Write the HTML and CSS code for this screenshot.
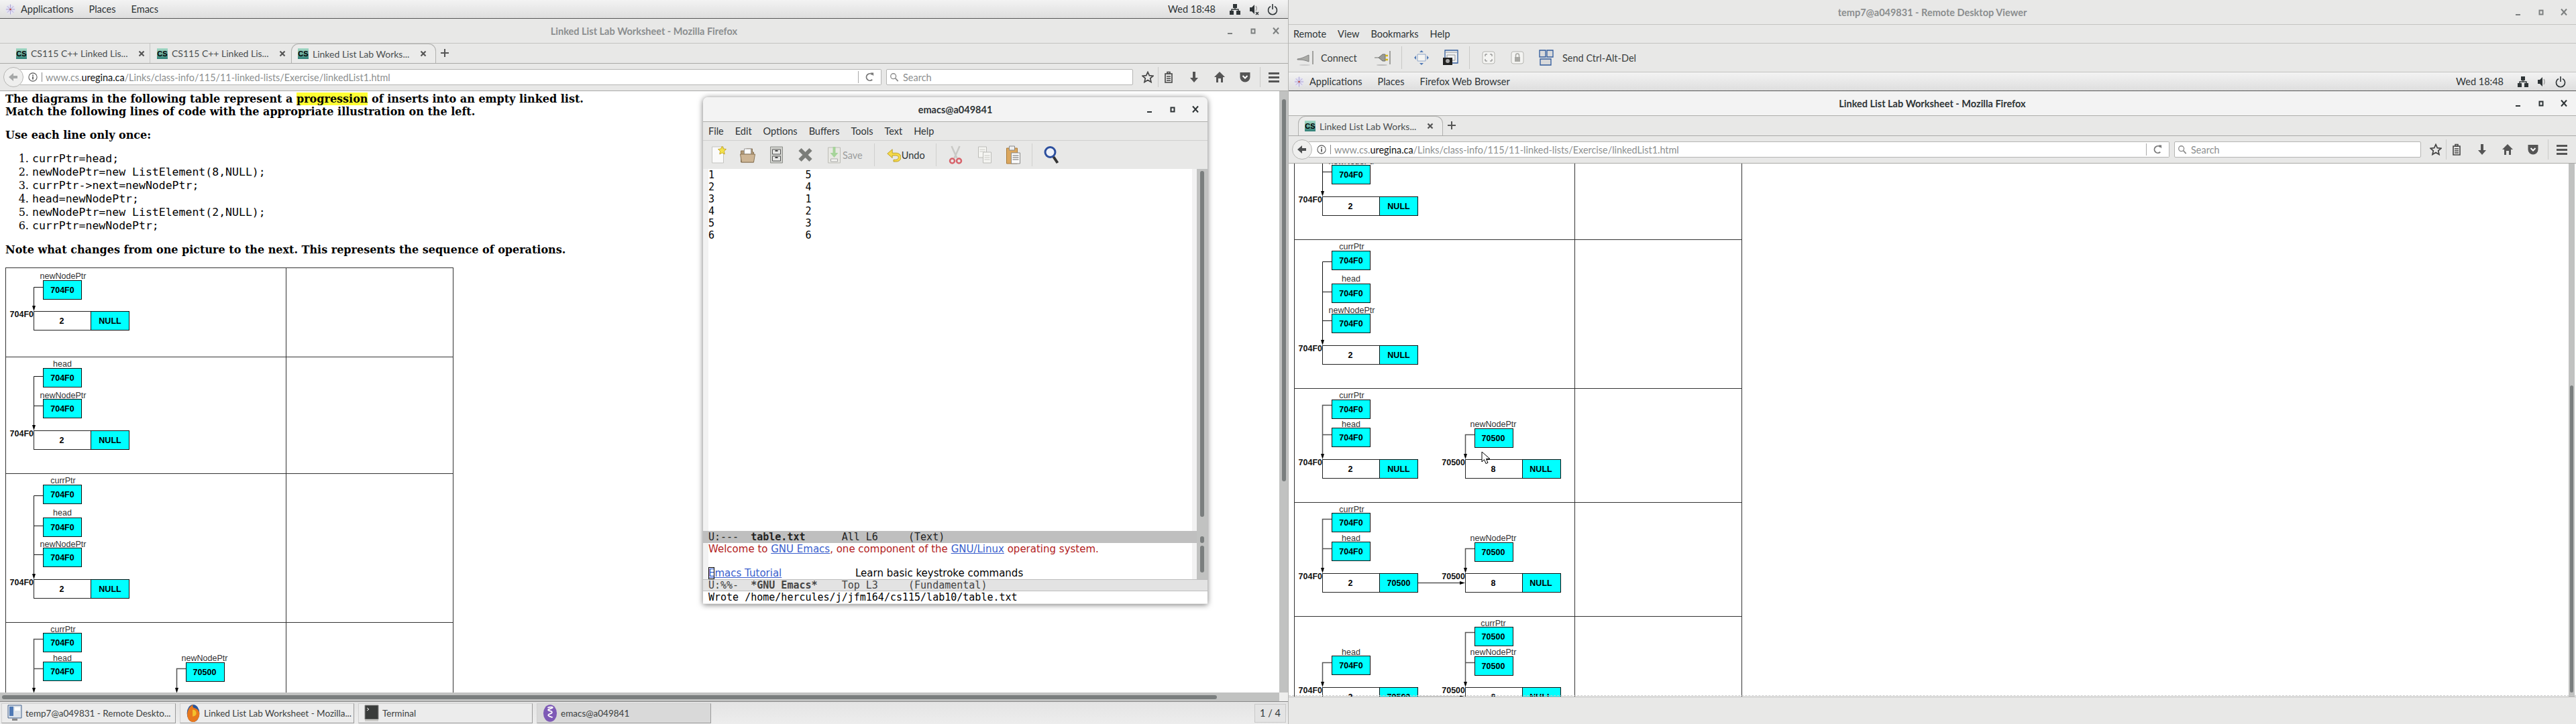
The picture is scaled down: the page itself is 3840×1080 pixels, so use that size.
FILE: index.html
```html
<!DOCTYPE html>
<html lang="en">
<head>
    <meta charset="UTF-8">
    <title>Linked List Lab Worksheet</title>
    <link rel="stylesheet" href="styles.css">
</head>
<body>
<svg class="sprite" width="0" height="0">
    <symbol id="i-min" viewBox="0 0 16 16"><rect x="4" y="11" width="7" height="2" fill="currentColor"/></symbol>
    <symbol id="i-max" viewBox="0 0 16 16"><rect x="5.5" y="5.5" width="5" height="6" fill="none" stroke="currentColor" stroke-width="2"/></symbol>
    <symbol id="i-close" viewBox="0 0 16 16"><path d="M4 3.5l8 9M12 3.5l-8 9" fill="none" stroke="currentColor" stroke-width="2"/></symbol>
    <symbol id="i-foot" viewBox="0 0 16 18"><circle cx="8" cy="9" r="7.5" fill="#e4e2f2"/><path d="M8 1v16M1 9h14M3 4l10 10M13 4L3 14" stroke="#a8a2d0" stroke-width="1"/><circle cx="8" cy="9" r="3" fill="#c9c3e4"/><circle cx="8" cy="9" r="1.3" fill="#c0392b"/></symbol>
    <symbol id="i-net" viewBox="0 0 16 18"><path d="M5 1h6v6H5zM0 11h6v6H0zM10 11h6v6h-6z" fill="#2e3436"/><path d="M8 6v3M3 12V9h10v3" fill="none" stroke="#2e3436" stroke-width="1.4"/></symbol>
    <symbol id="i-vol" viewBox="0 0 16 18"><path d="M2 6h3l4-4v14l-4-4H2z" fill="#2e3436"/><path d="M11 5c1.500 2 1.500 6 0 8" fill="none" stroke="#999" stroke-width="1.300"/></symbol>
    <symbol id="i-mute" viewBox="0 0 16 18"><path d="M2 6h3l4-4v14l-4-4H2z" fill="#2e3436"/><path d="M11 13l4 4M15 13l-4 4" stroke="#2e3436" stroke-width="1.500"/><path d="M11 4c1.500 2 1.500 5 0 7" fill="none" stroke="#999" stroke-width="1.300"/></symbol>
    <symbol id="i-power" viewBox="0 0 16 18"><path d="M5 4.500a6.500 6.500 0 1 0 6 0" fill="none" stroke="#2e3436" stroke-width="1.600"/><path d="M8 1v8" stroke="#2e3436" stroke-width="1.600"/></symbol>
    <symbol id="i-x" viewBox="0 0 10 10"><path d="M1.500 1.500l7 7M8.500 1.500l-7 7" stroke="#555" stroke-width="2.200"/></symbol>
    <symbol id="i-plus" viewBox="0 0 14 14"><path d="M7 1v12M1 7h12" stroke="#555" stroke-width="2"/></symbol>
    <symbol id="i-back" viewBox="0 0 16 16"><path d="M14 6H8V2L1 8l7 6v-4h6z" fill="currentColor"/></symbol>
    <symbol id="i-info" viewBox="0 0 16 16"><circle cx="8" cy="8" r="7" fill="none" stroke="#555" stroke-width="1.200"/><rect x="7" y="7" width="2" height="5" fill="#555"/><rect x="7" y="4" width="2" height="2" fill="#555"/></symbol>
    <symbol id="i-reload" viewBox="0 0 16 16"><path d="M12 12a5.500 5.500 0 1 1 0-8" fill="none" stroke="#777" stroke-width="2"/><path d="M9 1l5 0 0 5z" fill="#777"/></symbol>
    <symbol id="i-search" viewBox="0 0 16 16"><circle cx="6.500" cy="6.500" r="4.500" fill="none" stroke="#888" stroke-width="1.500"/><path d="M10 10l4.500 5" stroke="#888" stroke-width="2"/></symbol>
    <symbol id="i-star" viewBox="0 0 18 18"><path d="M9 1.500l2.300 5.200 5.700.5-4.300 3.700 1.300 5.600L9 13.500l-5 3 1.300-5.600L1 7.200l5.700-.5z" fill="none" stroke="#444" stroke-width="1.700"/></symbol>
    <symbol id="i-clip" viewBox="0 0 18 18"><path d="M4 4h10v13H4z" fill="none" stroke="#444" stroke-width="1.600"/><path d="M7 1.500h4V4H7zM6 8h6M6 11h6M6 14h6" fill="none" stroke="#444" stroke-width="1.500"/></symbol>
    <symbol id="i-down" viewBox="0 0 18 18"><path d="M7 1h4v9h4l-6 7-6-7h4z" fill="#555"/></symbol>
    <symbol id="i-home" viewBox="0 0 18 18"><path d="M9 1l8 8h-3v8h-3v-6H7v6H4V9H1z" fill="#555"/></symbol>
    <symbol id="i-pocket" viewBox="0 0 18 18"><path d="M1.500 2h15v7a7.500 7.500 0 0 1-15 0z" fill="#555"/><path d="M5.500 7L9 10.500 12.500 7" fill="none" stroke="#fff" stroke-width="2"/></symbol>
    <symbol id="i-menu" viewBox="0 0 18 18"><path d="M1 2h16v3H1zM1 8h16v3H1zM1 14h16v3H1z" fill="#555"/></symbol>
    <symbol id="i-new" viewBox="0 0 24 30"><path d="M2 3h17v24H2z" fill="#fafafa" stroke="#c4c4c0"/><path d="M17 2l2 4 4 .5-3 3 .7 4.500-3.700-2-3.700 2 .7-4.500-3-3 4-.5z" fill="#f3e24a" stroke="#c8a92a"/></symbol>
    <symbol id="i-open" viewBox="0 0 24 30"><path d="M2 9h8V6h9v5h2v15H2z" fill="#b39a78" stroke="#8a7556"/><path d="M7 6h10v8H7z" fill="#fff" stroke="#999"/><path d="M1 14h22l-2 12H3z" fill="#cdb595" stroke="#8a7556"/></symbol>
    <symbol id="i-cabinet" viewBox="0 0 24 30"><path d="M3 3h18v24H3z" fill="#cfd0cc" stroke="#8d8f8a"/><path d="M6 7h12v7H6zM6 17h12v7H6z" fill="#e8e8e6" stroke="#555"/><path d="M10 9h4M10 19h4" stroke="#444" stroke-width="2"/></symbol>
    <symbol id="i-delete" viewBox="0 0 24 30"><path d="M4 7l16 16M20 7L4 23" stroke="#7b7d79" stroke-width="6"/></symbol>
    <symbol id="i-saveas" viewBox="0 0 24 30"><path d="M3 4h18v23H3z" fill="#e8e8e3" stroke="#bcbcb6"/><path d="M10 3h4v9h4l-6 7-6-7h4z" fill="#a6d49a"/><path d="M7 21h10v4H7z" fill="#f5f5f2" stroke="#aaa"/></symbol>
    <symbol id="i-undo" viewBox="0 0 24 26"><path d="M10 4L2 11l8 7v-4h6c3 0 4 2 4 3s-1 4-5 4h-3v3h4c5 0 8-3 8-7s-3-7-8-7h-6z" fill="#f5d94a" stroke="#b89b22"/></symbol>
    <symbol id="i-cut" viewBox="0 0 24 30"><path d="M6 2l8 18M18 2l-8 18" stroke="#c9c9c6" stroke-width="2.500"/><circle cx="7" cy="24" r="3.500" fill="none" stroke="#d7636b" stroke-width="2.500"/><circle cx="17" cy="24" r="3.500" fill="none" stroke="#d7636b" stroke-width="2.500"/></symbol>
    <symbol id="i-copy" viewBox="0 0 24 30"><path d="M3 3h12v16H3z" fill="#f5f5f2" stroke="#bcbcb8"/><path d="M10 11h12v16H10z" fill="#f5f5f2" stroke="#bcbcb8"/><path d="M5 7h8M5 10h8M12 16h8M12 19h8M12 22h8" stroke="#c8c8c4"/></symbol>
    <symbol id="i-paste" viewBox="0 0 24 30"><path d="M2 5h16v23H2z" fill="#dba75e" stroke="#a97b38"/><path d="M6 2h8v6H6z" fill="#eee" stroke="#888"/><path d="M9 12h13v16H9z" fill="#fafafa" stroke="#888"/><path d="M11 16h9M11 19h9M11 22h9" stroke="#666"/></symbol>
    <symbol id="i-find" viewBox="0 0 24 30"><circle cx="10" cy="11" r="7.500" fill="#eef2fa" stroke="#2c4f9e" stroke-width="3"/><path d="M15 18l6 9" stroke="#333" stroke-width="4"/></symbol>
    <symbol id="i-connect" viewBox="0 0 26 24"><path d="M1 14c8-1 12-4 17-6v10c-5-2-9-3-17-3z" fill="#a9aaa6" stroke="#808080"/><path d="M24 2v20" stroke="#8a8a86" stroke-width="1.500"/><ellipse cx="12" cy="23" rx="8" ry="1" fill="#ccc"/></symbol>
    <symbol id="i-plug" viewBox="0 0 26 24"><path d="M1 12h6l6-5h4v10h-4l-6-5" fill="#9a9b97" stroke="#6f706c"/><path d="M17 9h4M17 15h4" stroke="#d3b418" stroke-width="2.500"/><path d="M24 2v20" stroke="#8a8a86" stroke-width="1.500"/><ellipse cx="12" cy="23" rx="8" ry="1" fill="#bbb"/></symbol>
    <symbol id="i-arrows" viewBox="0 0 24 24"><path d="M6 7h12v10H6z" fill="#f4f4f2" stroke="#8ea5c8"/><path d="M12 1l3 3H9zM12 23l3-3H9zM1 12l3-3v6zM23 12l-3-3v6z" fill="#4f79b5"/></symbol>
    <symbol id="i-shot" viewBox="0 0 24 24"><path d="M4 1h19v19H4z" fill="#eef0f2" stroke="#2f5a9b" stroke-width="1.300"/><path d="M4 4h19M7 8h12v8H7z" fill="none" stroke="#999"/><path d="M1 12h14v11H1z" fill="#222"/><circle cx="8" cy="17" r="3" fill="#aaa"/></symbol>
    <symbol id="i-full" viewBox="0 0 20 20"><rect x="1" y="1" width="18" height="18" rx="3" fill="#f4f4f2" stroke="#b5b5b1"/><path d="M5 8V5h3M12 5h3v3M15 12v3h-3M8 15H5v-3" fill="none" stroke="#777"/></symbol>
    <symbol id="i-lock" viewBox="0 0 20 20"><rect x="1" y="1" width="18" height="18" rx="3" fill="#f4f4f2" stroke="#b5b5b1"/><path d="M6 9h8v7H6z" fill="#a8a8a4"/><path d="M7.500 9V6.500a2.500 2.500 0 0 1 5 0V9" fill="none" stroke="#a8a8a4" stroke-width="1.500"/></symbol>
    <symbol id="i-keys" viewBox="0 0 22 24"><path d="M1 1h9v10H1zM12 1h9v10h-9zM2 14h16v9H2z" fill="#d9dadb" stroke="#2f5a9b" stroke-width="1.300"/></symbol>
    <symbol id="i-viewer" viewBox="0 0 22 26"><path d="M1 1h20v19H1z" fill="#dde3ea" stroke="#44628c"/><path d="M3 3h6v14H3z" fill="#4f79b5"/><path d="M11 4h8v5h-8z" fill="#fff"/><path d="M7 21h8v3H7z" fill="#888"/></symbol>
    <symbol id="i-fox" viewBox="0 0 22 30"><ellipse cx="11" cy="15" rx="10" ry="14" fill="#28559c"/><path d="M3 24C-1 15 4 4 11 1c-2 4 0 5 3 6 4 1 7 5 7 9 0 8-6 13-10 13-3 0-6-2-8-5z" fill="#e8791e"/><path d="M10 9c4 0 6 3 6 6s-3 5-6 5z" fill="#f4c12d"/></symbol>
    <symbol id="i-term" viewBox="0 0 22 26"><path d="M1 1h20v21H1z" fill="#3a3c3b" stroke="#888"/><path d="M1 22h20v3H1z" fill="#c9c9c6"/><path d="M4 5l3 2-3 2" fill="none" stroke="#eee"/></symbol>
    <symbol id="i-emacs" viewBox="0 0 24 30"><ellipse cx="12" cy="15" rx="11" ry="14" fill="#7e5ab6"/><path d="M8 6c5-2 9-1 8 0-3 2-8 2-7 4 2 2 7 1 6 4-1 2-6 2-6 4s6 3 7 4" fill="none" stroke="#fff" stroke-width="2"/></symbol>
</svg>

<div class="desktop">
    <section class="screen">
        <div class="panel">
            <svg class="foot"><use href="#i-foot"/></svg>
            <span class="panel-item">Applications</span>
            <span class="panel-item">Places</span>
            <span class="panel-item">Emacs</span>
            <div class="status">
                <span class="clock">Wed 18:48</span>
                <svg class="status-icon"><use href="#i-net"/></svg>
                <svg class="status-icon"><use href="#i-mute"/></svg>
                <svg class="status-icon"><use href="#i-power"/></svg>
            </div>
        </div>
        <div class="firefox">
            <div class="titlebar">
                <span class="title">Linked List Lab Worksheet - Mozilla Firefox</span>
                <div class="win-controls">
                    <svg><use href="#i-min"/></svg><svg><use href="#i-max"/></svg><svg><use href="#i-close"/></svg>
                </div>
            </div>
            <div class="tabs">
                <div class="tab tab-sep">
                    <span class="fav">CS</span><span class="tab-text">CS115 C++ Linked Lis...</span><svg class="tab-x"><use href="#i-x"/></svg>
                </div>
                <div class="tab">
                    <span class="fav">CS</span><span class="tab-text">CS115 C++ Linked Lis...</span><svg class="tab-x"><use href="#i-x"/></svg>
                </div>
                <div class="tab tab-active">
                    <span class="fav">CS</span><span class="tab-text">Linked List Lab Works...</span><svg class="tab-x"><use href="#i-x"/></svg>
                </div>
                <svg class="tab-plus"><use href="#i-plus"/></svg>
            </div>
            <div class="navbar">
                <div class="back back-off"><svg><use href="#i-back"/></svg></div>
                <div class="urlbar">
                    <svg class="url-info"><use href="#i-info"/></svg>
                    <span class="url-text">www.cs.<b>uregina.ca</b>/Links/class-info/115/11-linked-lists/Exercise/linkedList1.html</span>
                    <div class="url-reload"><svg><use href="#i-reload"/></svg></div>
                </div>
                <div class="searchbar"><svg><use href="#i-search"/></svg><span>Search</span></div>
                <div class="nav-icons">
                    <div class="nav-icon nav-star"><svg><use href="#i-star"/></svg></div>
                    <div class="nav-icon nav-clip"><svg><use href="#i-clip"/></svg></div>
                    <div class="nav-icon"><svg><use href="#i-down"/></svg></div>
                    <div class="nav-icon"><svg><use href="#i-home"/></svg></div>
                    <div class="nav-icon"><svg><use href="#i-pocket"/></svg></div>
                    <div class="nav-icon nav-menu"><svg><use href="#i-menu"/></svg></div>
                </div>
            </div>
            <div class="viewport">
                <div class="viewport-row">
                    <div class="page">
                        <p class="intro">The diagrams in the following table represent a <mark>progression</mark> of inserts into an empty linked list.<br>Match the following lines of code with the appropriate illustration on the left.</p>
                        <p class="intro">Use each line only once:</p>
                        <ol class="code-list">
                            <li><code>currPtr=head;</code></li>
                            <li><code>newNodePtr=new ListElement(8,NULL);</code></li>
                            <li><code>currPtr-&gt;next=newNodePtr;</code></li>
                            <li><code>head=newNodePtr;</code></li>
                            <li><code>newNodePtr=new ListElement(2,NULL);</code></li>
                            <li><code>currPtr=newNodePtr;</code></li>
                        </ol>
                        <p class="intro">Note what changes from one picture to the next. This represents the sequence of operations.</p>
                        <table class="worksheet">
                            <tr>
                                <td>
                                    <svg class="diagram" width="417" height="132">
                                        <text class="lbl" x="85" y="16">newNodePtr</text>
                                        <path class="wire" d="M55 28.500H41.500V58"/>
                                        <polygon class="tip" points="39,56 44,56 41.500,64"/>
                                        <rect class="ptr" x="55.500" y="18.500" width="57" height="28"/>
                                        <text class="val" x="84" y="37">704F0</text>
                                        <text class="addr" x="41" y="73">704F0</text>
                                        <rect class="node" x="41.500" y="64.500" width="142" height="28"/>
                                        <rect class="ptr" x="126.500" y="64.500" width="57" height="28"/>
                                        <text class="val" x="83" y="83">2</text>
                                        <text class="val" x="155" y="83">NULL</text>
                                    </svg>
                                </td>
                                <td class="answer"></td>
                            </tr>
                            <tr>
                                <td>
                                    <svg class="diagram" width="417" height="173">
                                        <text class="lbl" x="84" y="14">head</text>
                                        <text class="lbl" x="85" y="61">newNodePtr</text>
                                        <path class="wire" d="M55 28.500H41.500V103M55 72.500H41.500"/>
                                        <polygon class="tip" points="39,101 44,101 41.500,109"/>
                                        <rect class="ptr" x="55.500" y="16.500" width="57" height="28"/>
                                        <text class="val" x="84" y="35">704F0</text>
                                        <rect class="ptr" x="55.500" y="62.500" width="57" height="28"/>
                                        <text class="val" x="84" y="81">704F0</text>
                                        <text class="addr" x="41" y="118">704F0</text>
                                        <rect class="node" x="41.500" y="109.500" width="142" height="28"/>
                                        <rect class="ptr" x="126.500" y="109.500" width="57" height="28"/>
                                        <text class="val" x="83" y="128">2</text>
                                        <text class="val" x="155" y="128">NULL</text>
                                    </svg>
                                </td>
                                <td class="answer"></td>
                            </tr>
                            <tr>
                                <td>
                                    <svg class="diagram" width="417" height="221">
                                        <text class="lbl" x="85" y="14">currPtr</text>
                                        <text class="lbl" x="84" y="62">head</text>
                                        <text class="lbl" x="85" y="109">newNodePtr</text>
                                        <path class="wire" d="M55 32.500H41.500V151M55 77.500H41.500M55 120.500H41.500"/>
                                        <polygon class="tip" points="39,149 44,149 41.500,157"/>
                                        <rect class="ptr" x="55.500" y="16.500" width="57" height="28"/>
                                        <text class="val" x="84" y="35">704F0</text>
                                        <rect class="ptr" x="55.500" y="65.500" width="57" height="28"/>
                                        <text class="val" x="84" y="84">704F0</text>
                                        <rect class="ptr" x="55.500" y="110.500" width="57" height="28"/>
                                        <text class="val" x="84" y="129">704F0</text>
                                        <text class="addr" x="41" y="166">704F0</text>
                                        <rect class="node" x="41.500" y="157.500" width="142" height="28"/>
                                        <rect class="ptr" x="126.500" y="157.500" width="57" height="28"/>
                                        <text class="val" x="83" y="176">2</text>
                                        <text class="val" x="155" y="176">NULL</text>
                                    </svg>
                                </td>
                                <td class="answer"></td>
                            </tr>
                            <tr>
                                <td>
                                    <svg class="diagram" width="417" height="170">
                                        <text class="lbl" x="85" y="14">currPtr</text>
                                        <text class="lbl" x="84" y="57">head</text>
                                        <text class="lbl" x="296" y="57">newNodePtr</text>
                                        <path class="wire wire-grey" d="M55 24.500H41.500V99M55 68.500H41.500M268 68.500H254.500V99"/>
                                        <polygon class="tip" points="39,97 44,97 41.500,105"/>
                                        <polygon class="tip" points="252,97 257,97 254.500,105"/>
                                        <rect class="ptr" x="55.500" y="15.500" width="57" height="28"/>
                                        <text class="val" x="84" y="34">704F0</text>
                                        <rect class="ptr" x="55.500" y="58.500" width="57" height="28"/>
                                        <text class="val" x="84" y="77">704F0</text>
                                        <rect class="ptr" x="268.500" y="59.500" width="57" height="28"/>
                                        <text class="val" x="296" y="78">70500</text>
                                        <text class="addr" x="41" y="114">704F0</text>
                                        <rect class="node" x="41.500" y="105.500" width="142" height="28"/>
                                        <rect class="ptr" x="126.500" y="105.500" width="57" height="28"/>
                                        <text class="val" x="83" y="124">2</text>
                                        <text class="val" x="155" y="124">NULL</text>
                                        <text class="addr" x="254" y="114">70500</text>
                                        <rect class="node" x="254.500" y="105.500" width="142" height="28"/>
                                        <rect class="ptr" x="339.500" y="105.500" width="57" height="28"/>
                                        <text class="val" x="296" y="124">8</text>
                                        <text class="val" x="367" y="124">NULL</text>
                                    </svg>
                                </td>
                                <td class="answer"></td>
                            </tr>
                        </table>
                    </div>
                    <div class="vscroll"><div class="vscroll-thumb"></div></div>
                </div>
                <div class="hscroll-row">
                    <div class="hscroll"><div class="hscroll-thumb"></div></div>
                    <div class="scroll-corner"></div>
                </div>
            </div>
        </div>
        <div class="taskbar">
            <div class="task"><svg class="task-icon"><use href="#i-viewer"/></svg><span class="task-text">temp7@a049831 - Remote Deskto...</span></div>
            <div class="task"><svg class="task-icon"><use href="#i-fox"/></svg><span class="task-text">Linked List Lab Worksheet - Mozilla...</span></div>
            <div class="task"><svg class="task-icon"><use href="#i-term"/></svg><span class="task-text">Terminal</span></div>
            <div class="task task-active"><svg class="task-icon"><use href="#i-emacs"/></svg><span class="task-text">emacs@a049841</span></div>
            <div class="pager">1 / 4</div>
        </div>

        <div class="emacs">
            <div class="titlebar titlebar-active">
                <span class="title">emacs@a049841</span>
                <div class="win-controls">
                    <svg><use href="#i-min"/></svg><svg><use href="#i-max"/></svg><svg><use href="#i-close"/></svg>
                </div>
            </div>
            <div class="em-menu">
                <span>File</span><span>Edit</span><span>Options</span><span>Buffers</span><span>Tools</span><span>Text</span><span>Help</span>
            </div>
            <div class="em-tools">
                <svg class="em-tool"><use href="#i-new"/></svg>
                <svg class="em-tool"><use href="#i-open"/></svg>
                <svg class="em-tool"><use href="#i-cabinet"/></svg>
                <svg class="em-tool"><use href="#i-delete"/></svg>
                <svg class="em-tool"><use href="#i-saveas"/></svg>
                <span class="em-save">Save</span>
                <i class="em-sep"></i>
                <svg class="em-undo"><use href="#i-undo"/></svg>
                <span class="em-undo-text">Undo</span>
                <i class="em-sep em-sep-undo"></i>
                <svg class="em-tool"><use href="#i-cut"/></svg>
                <svg class="em-tool"><use href="#i-copy"/></svg>
                <svg class="em-tool"><use href="#i-paste"/></svg>
                <i class="em-sep em-sep-tight"></i>
                <svg class="em-tool"><use href="#i-find"/></svg>
            </div>
            <div class="em-pane em-pane-main">
                <pre class="em-text">1               5
2               4
3               1
4               2
5               3
6               6</pre>
                <div class="em-fringe"></div>
                <div class="em-sb"><div class="em-thumb em-thumb-main"></div></div>
            </div>
            <div class="modeline">
                <pre class="mode-text">U:---  <b>table.txt</b>      All L6     (Text)</pre>
                <div class="em-sb"><div class="em-thumb em-thumb-pip"></div></div>
            </div>
            <div class="em-pane em-pane-splash">
                <div class="em-splash">
                    <div class="splash-line splash-red">Welcome to <a>GNU Emacs</a>, one component of the <a>GNU/Linux</a> operating system.</div>
                    <div class="splash-line"></div>
                    <div class="splash-line"><a class="tutorial"><span class="cursor">E</span>macs Tutorial</a><span class="splash-desc">Learn basic keystroke commands</span></div>
                </div>
                <div class="em-fringe"></div>
                <div class="em-sb"><div class="em-thumb em-thumb-splash"></div></div>
            </div>
            <div class="modeline modeline-off">
                <pre class="mode-text">U:%%-  <b>*GNU Emacs*</b>    Top L3     (Fundamental)</pre>
            </div>
            <div class="echo"><pre class="echo-text">Wrote /home/hercules/j/jfm164/cs115/lab10/table.txt</pre></div>
        </div>
    </section>

    <section class="screen screen-remote">
        <div class="titlebar titlebar-remote">
            <span class="title">temp7@a049831 - Remote Desktop Viewer</span>
            <div class="win-controls">
                <svg><use href="#i-min"/></svg><svg><use href="#i-max"/></svg><svg><use href="#i-close"/></svg>
            </div>
        </div>
        <div class="rd-menu">
            <span>Remote</span><span>View</span><span>Bookmarks</span><span>Help</span>
        </div>
        <div class="rd-tools">
            <svg class="rd-connect"><use href="#i-connect"/></svg>
            <span class="rd-label rd-connect-text">Connect</span>
            <svg class="rd-plug"><use href="#i-plug"/></svg>
            <i class="rd-sep"></i>
            <svg class="rd-arrows"><use href="#i-arrows"/></svg>
            <svg class="rd-shot"><use href="#i-shot"/></svg>
            <i class="rd-sep rd-sep-2"></i>
            <svg class="rd-full"><use href="#i-full"/></svg>
            <svg class="rd-lock"><use href="#i-lock"/></svg>
            <svg class="rd-keys"><use href="#i-keys"/></svg>
            <span class="rd-label rd-send">Send Ctrl-Alt-Del</span>
        </div>
        <div class="panel panel-inner">
            <svg class="foot"><use href="#i-foot"/></svg>
            <span class="panel-item">Applications</span>
            <span class="panel-item">Places</span>
            <span class="panel-item">Firefox Web Browser</span>
            <div class="status">
                <span class="clock">Wed 18:48</span>
                <svg class="status-icon"><use href="#i-net"/></svg>
                <svg class="status-icon"><use href="#i-vol"/></svg>
                <svg class="status-icon"><use href="#i-power"/></svg>
            </div>
        </div>
        <div class="firefox firefox-remote">
            <div class="titlebar titlebar-active">
                <span class="title">Linked List Lab Worksheet - Mozilla Firefox</span>
                <div class="win-controls">
                    <svg><use href="#i-min"/></svg><svg><use href="#i-max"/></svg><svg><use href="#i-close"/></svg>
                </div>
            </div>
            <div class="tabs">
                <div class="tab tab-active">
                    <span class="fav">CS</span><span class="tab-text">Linked List Lab Works...</span><svg class="tab-x"><use href="#i-x"/></svg>
                </div>
                <svg class="tab-plus"><use href="#i-plus"/></svg>
            </div>
            <div class="navbar">
                <div class="back"><svg><use href="#i-back"/></svg></div>
                <div class="urlbar">
                    <svg class="url-info"><use href="#i-info"/></svg>
                    <span class="url-text">www.cs.<b>uregina.ca</b>/Links/class-info/115/11-linked-lists/Exercise/linkedList1.html</span>
                    <div class="url-reload"><svg><use href="#i-reload"/></svg></div>
                </div>
                <div class="searchbar"><svg><use href="#i-search"/></svg><span>Search</span></div>
                <div class="nav-icons">
                    <div class="nav-icon nav-star"><svg><use href="#i-star"/></svg></div>
                    <div class="nav-icon nav-clip"><svg><use href="#i-clip"/></svg></div>
                    <div class="nav-icon"><svg><use href="#i-down"/></svg></div>
                    <div class="nav-icon"><svg><use href="#i-home"/></svg></div>
                    <div class="nav-icon"><svg><use href="#i-pocket"/></svg></div>
                    <div class="nav-icon nav-menu"><svg><use href="#i-menu"/></svg></div>
                </div>
            </div>
            <div class="viewport viewport-remote">
                <div class="viewport-row">
                    <div class="page">
                        <table class="worksheet worksheet-scrolled">
                            <tr>
                                <td>
                                    <svg class="diagram" width="417" height="173">
                                        <text class="lbl" x="84" y="14">head</text>
                                        <text class="lbl" x="85" y="61">newNodePtr</text>
                                        <path class="wire" d="M55 28.500H41.500V103M55 72.500H41.500"/>
                                        <polygon class="tip" points="39,101 44,101 41.500,109"/>
                                        <rect class="ptr" x="55.500" y="16.500" width="57" height="28"/>
                                        <text class="val" x="84" y="35">704F0</text>
                                        <rect class="ptr" x="55.500" y="62.500" width="57" height="28"/>
                                        <text class="val" x="84" y="81">704F0</text>
                                        <text class="addr" x="41" y="118">704F0</text>
                                        <rect class="node" x="41.500" y="109.500" width="142" height="28"/>
                                        <rect class="ptr" x="126.500" y="109.500" width="57" height="28"/>
                                        <text class="val" x="83" y="128">2</text>
                                        <text class="val" x="155" y="128">NULL</text>
                                    </svg>
                                </td>
                                <td class="answer"></td>
                            </tr>
                            <tr>
                                <td>
                                    <svg class="diagram" width="417" height="221">
                                        <text class="lbl" x="85" y="14">currPtr</text>
                                        <text class="lbl" x="84" y="62">head</text>
                                        <text class="lbl" x="85" y="109">newNodePtr</text>
                                        <path class="wire" d="M55 32.500H41.500V151M55 77.500H41.500M55 120.500H41.500"/>
                                        <polygon class="tip" points="39,149 44,149 41.500,157"/>
                                        <rect class="ptr" x="55.500" y="16.500" width="57" height="28"/>
                                        <text class="val" x="84" y="35">704F0</text>
                                        <rect class="ptr" x="55.500" y="65.500" width="57" height="28"/>
                                        <text class="val" x="84" y="84">704F0</text>
                                        <rect class="ptr" x="55.500" y="110.500" width="57" height="28"/>
                                        <text class="val" x="84" y="129">704F0</text>
                                        <text class="addr" x="41" y="166">704F0</text>
                                        <rect class="node" x="41.500" y="157.500" width="142" height="28"/>
                                        <rect class="ptr" x="126.500" y="157.500" width="57" height="28"/>
                                        <text class="val" x="83" y="176">2</text>
                                        <text class="val" x="155" y="176">NULL</text>
                                    </svg>
                                </td>
                                <td class="answer"></td>
                            </tr>
                            <tr>
                                <td>
                                    <svg class="diagram" width="417" height="169">
                                        <text class="lbl" x="85" y="14">currPtr</text>
                                        <text class="lbl" x="84" y="57">head</text>
                                        <text class="lbl" x="296" y="57">newNodePtr</text>
                                        <path class="wire wire-grey" d="M55 24.500H41.500V99M55 68.500H41.500M268 68.500H254.500V99"/>
                                        <polygon class="tip" points="39,97 44,97 41.500,105"/>
                                        <polygon class="tip" points="252,97 257,97 254.500,105"/>
                                        <rect class="ptr" x="55.500" y="16.500" width="57" height="28"/>
                                        <text class="val" x="84" y="35">704F0</text>
                                        <rect class="ptr" x="55.500" y="58.500" width="57" height="28"/>
                                        <text class="val" x="84" y="77">704F0</text>
                                        <rect class="ptr" x="268.500" y="59.500" width="57" height="28"/>
                                        <text class="val" x="296" y="78">70500</text>
                                        <text class="addr" x="41" y="114">704F0</text>
                                        <rect class="node" x="41.500" y="105.500" width="142" height="28"/>
                                        <rect class="ptr" x="126.500" y="105.500" width="57" height="28"/>
                                        <text class="val" x="83" y="124">2</text>
                                        <text class="val" x="155" y="124">NULL</text>
                                        <text class="addr" x="254" y="114">70500</text>
                                        <rect class="node" x="254.500" y="105.500" width="142" height="28"/>
                                        <rect class="ptr" x="339.500" y="105.500" width="57" height="28"/>
                                        <text class="val" x="296" y="124">8</text>
                                        <text class="val" x="367" y="124">NULL</text>
                                    </svg>
                                </td>
                                <td class="answer"></td>
                            </tr>
                            <tr>
                                <td>
                                    <svg class="diagram" width="417" height="169">
                                        <text class="lbl" x="85" y="14">currPtr</text>
                                        <text class="lbl" x="84" y="57">head</text>
                                        <text class="lbl" x="296" y="57">newNodePtr</text>
                                        <path class="wire wire-grey" d="M55 24.500H41.500V99M55 68.500H41.500M268 68.500H254.500V99"/>
                                        <path class="wire wire-grey" d="M183 119.500H248"/>
                                        <polygon class="tip" points="39,97 44,97 41.500,105"/>
                                        <polygon class="tip" points="252,97 257,97 254.500,105"/>
                                        <polygon class="tip" points="246,117 246,122 254,119.500"/>
                                        <rect class="ptr" x="55.500" y="15.500" width="57" height="28"/>
                                        <text class="val" x="84" y="34">704F0</text>
                                        <rect class="ptr" x="55.500" y="58.500" width="57" height="28"/>
                                        <text class="val" x="84" y="77">704F0</text>
                                        <rect class="ptr" x="268.500" y="59.500" width="57" height="28"/>
                                        <text class="val" x="296" y="78">70500</text>
                                        <text class="addr" x="41" y="114">704F0</text>
                                        <rect class="node" x="41.500" y="105.500" width="142" height="28"/>
                                        <rect class="ptr" x="126.500" y="105.500" width="57" height="28"/>
                                        <text class="val" x="83" y="124">2</text>
                                        <text class="val" x="155" y="124">70500</text>
                                        <text class="addr" x="254" y="114">70500</text>
                                        <rect class="node" x="254.500" y="105.500" width="142" height="28"/>
                                        <rect class="ptr" x="339.500" y="105.500" width="57" height="28"/>
                                        <text class="val" x="296" y="124">8</text>
                                        <text class="val" x="367" y="124">NULL</text>
                                    </svg>
                                </td>
                                <td class="answer"></td>
                            </tr>
                            <tr>
                                <td>
                                    <svg class="diagram" width="417" height="170">
                                        <text class="lbl" x="296" y="14">currPtr</text>
                                        <text class="lbl" x="84" y="57">head</text>
                                        <text class="lbl" x="296" y="57">newNodePtr</text>
                                        <path class="wire wire-grey" d="M55 68.500H41.500V99M268 23.500H254.500V99M268 68.500H254.500"/>
                                        <path class="wire wire-grey" d="M183 119.500H248"/>
                                        <polygon class="tip" points="39,97 44,97 41.500,105"/>
                                        <polygon class="tip" points="252,97 257,97 254.500,105"/>
                                        <polygon class="tip" points="246,117 246,122 254,119.500"/>
                                        <rect class="ptr" x="268.500" y="15.500" width="57" height="28"/>
                                        <text class="val" x="296" y="34">70500</text>
                                        <rect class="ptr" x="55.500" y="58.500" width="57" height="28"/>
                                        <text class="val" x="84" y="77">704F0</text>
                                        <rect class="ptr" x="268.500" y="59.500" width="57" height="28"/>
                                        <text class="val" x="296" y="78">70500</text>
                                        <text class="addr" x="41" y="114">704F0</text>
                                        <rect class="node" x="41.500" y="105.500" width="142" height="28"/>
                                        <rect class="ptr" x="126.500" y="105.500" width="57" height="28"/>
                                        <text class="val" x="83" y="124">2</text>
                                        <text class="val" x="155" y="124">70500</text>
                                        <text class="addr" x="254" y="114">70500</text>
                                        <rect class="node" x="254.500" y="105.500" width="142" height="28"/>
                                        <rect class="ptr" x="339.500" y="105.500" width="57" height="28"/>
                                        <text class="val" x="296" y="124">8</text>
                                        <text class="val" x="367" y="124">NULL</text>
                                    </svg>
                                </td>
                                <td class="answer"></td>
                            </tr>
                        </table>
                    </div>
                    <div class="vscroll vscroll-remote"><div class="vscroll-thumb"></div></div>
                </div>
                <div class="dash-line"></div>
                <svg class="pointer" width="14" height="20" viewBox="0 0 14 20"><path d="M1 1v15l3.500-3.500 2.500 6 3-1.200-2.500-5.800H13z" fill="#fff" stroke="#000"/></svg>
            </div>
        </div>
        <div class="rd-foot"></div>
    </section>
</div>
</body>
</html>
```

FILE: styles.css
```css
html, body {
    margin: 0;
    padding: 0;
    background: #e8e8e7;
}
.sprite {
    position: absolute;
}
.desktop {
    display: flex;
    width: 3840px;
    height: 1080px;
    overflow: hidden;
    font-family: Lato, "Liberation Sans", sans-serif;
    font-size: 14.500px;
    color: #2e3436;
}
.screen {
    position: relative;
    display: flex;
    flex-direction: column;
    width: 1920px;
    height: 1080px;
    flex: none;
}
.screen-remote {
    border-left: 1px solid #b5b5b3;
    box-sizing: border-box;
}

/* gnome top panel */
.panel {
    display: flex;
    align-items: center;
    flex: none;
    height: 27px;
    padding-left: 8px;
    background: linear-gradient(#f3f3f3, #dedede);
    border-bottom: 1px solid #555;
}
.foot {
    width: 15px;
    height: 18px;
    margin-right: 8px;
}
.panel-item {
    margin-right: 23px;
}
.status {
    display: flex;
    align-items: center;
    margin-left: auto;
    padding-right: 9px;
}
.clock {
    margin-right: 15px;
}
.status-icon {
    width: 16px;
    height: 18px;
    padding: 0 6px;
}

/* window title bars */
.titlebar {
    position: relative;
    display: flex;
    align-items: center;
    justify-content: center;
    flex: none;
    height: 36px;
    background: #e8e8e7;
    border-bottom: 1px solid #c3c3c1;
    color: #8b8e8f;
}
.title {
    font-weight: 700;
}
.titlebar-active {
    background: #f3f3f3;
    color: #2e3436;
    border-bottom-color: #adadab;
}
.win-controls {
    position: absolute;
    right: 1px;
    top: 10px;
    display: flex;
    color: #7d8080;
}
.titlebar-active .win-controls {
    color: #2e3436;
}
.win-controls svg {
    width: 16px;
    height: 16px;
    padding: 0 9px;
}

/* firefox chrome */
.firefox {
    display: flex;
    flex-direction: column;
    flex: 1;
    min-height: 0;
}
.firefox-remote {
    flex: none;
    height: 904px;
}
.tabs {
    display: flex;
    align-items: flex-end;
    flex: none;
    height: 29px;
    padding-left: 14px;
    background: #e8e8e7;
    border-bottom: 1px solid #a9a9a7;
}
.tab {
    display: flex;
    align-items: center;
    box-sizing: border-box;
    width: 210px;
    height: 29px;
    padding-left: 10px;
    color: #4a4f50;
}
.tab-sep {
    border-right: 1px solid #c6c6c4;
}
.tab-active {
    width: 216px;
    padding-left: 9px;
    border: 1px solid #b1b1af;
    border-bottom: 0;
    border-radius: 11px 11px 0 0;
    background: #ebebea;
}
.fav {
    flex: none;
    width: 16px;
    height: 16px;
    margin-right: 6px;
    background: linear-gradient(#a7dcc8, #2f7f76);
    color: #000;
    font: bold 11px/16px "Liberation Sans", sans-serif;
    text-align: center;
}
.tab-text {
    flex: none;
    width: 154px;
    font-size: 14px;
    white-space: nowrap;
}
.tab-x {
    width: 10px;
    height: 10px;
    margin-left: 6px;
}
.tab-plus {
    width: 14px;
    height: 14px;
    margin: 0 0 8px 6px;
}
.navbar {
    display: flex;
    align-items: center;
    flex: none;
    height: 40px;
    padding-left: 5px;
    background: #e8e8e7;
    border-bottom: 1px solid #a9a9a7;
}
.back {
    position: relative;
    z-index: 1;
    display: flex;
    align-items: center;
    justify-content: center;
    flex: none;
    box-sizing: border-box;
    width: 30px;
    height: 30px;
    border: 1px solid #b5b5b3;
    border-radius: 50%;
    background: #efefee;
    color: #4d4f50;
}
.back-off {
    color: #a6a8a8;
}
.back svg {
    width: 16px;
    height: 16px;
}
.urlbar {
    display: flex;
    align-items: center;
    flex: 1;
    min-width: 0;
    box-sizing: border-box;
    height: 24px;
    margin-left: -5px;
    padding-left: 12px;
    background: #fff;
    border: 1px solid #b5b5b3;
    border-left: 0;
    border-radius: 0 2px 2px 0;
}
.url-info {
    flex: none;
    width: 14px;
    height: 14px;
    padding-right: 6px;
    border-right: 1px solid #888;
}
.url-text {
    flex: 1;
    margin-left: 5px;
    font-size: 14.400px;
    color: #8c8f8f;
    white-space: nowrap;
}
.url-text b {
    font-weight: 400;
    color: #111;
}
.url-reload {
    display: flex;
    justify-content: center;
    width: 33px;
    border-left: 1px solid #aaa;
}
.url-reload svg {
    width: 15px;
    height: 18px;
}
.searchbar {
    display: flex;
    align-items: center;
    flex: none;
    box-sizing: border-box;
    width: 368px;
    height: 24px;
    margin-left: 7px;
    padding-left: 4px;
    background: #fff;
    border: 1px solid #b5b5b3;
    border-radius: 2px;
    color: #8c8f8f;
}
.searchbar svg {
    width: 14px;
    height: 16px;
    margin-right: 6px;
}
.nav-icons {
    display: flex;
    align-items: center;
    flex: none;
    width: 231px;
    height: 30px;
}
.nav-icon {
    display: flex;
    align-items: center;
    justify-content: center;
    width: 38px;
    height: 30px;
}
.nav-icon svg {
    width: 18px;
    height: 18px;
}
.nav-star {
    width: 30px;
    margin-left: 7px;
    border-right: 1px solid #cbcbc9;
}
.nav-clip {
    width: 30px;
    margin-right: 4px;
}
.nav-menu {
    width: 40px;
    margin-left: 3px;
    border-left: 1px solid #cbcbc9;
}

/* page area */
.viewport {
    position: relative;
    display: flex;
    flex-direction: column;
    flex: 1;
    min-height: 0;
    background: #fff;
}
.viewport-row {
    display: flex;
    flex: 1;
    min-height: 0;
}
.page {
    flex: 1;
    min-width: 0;
    overflow: hidden;
    padding: 2px 0 0 8px;
}
.intro {
    margin: 0 0 16px;
    font-family: "DejaVu Serif", serif;
    font-size: 16px;
    font-weight: 700;
    line-height: 19px;
    color: #000;
}
mark {
    background: #ffff33;
    color: #000;
}
.code-list {
    margin: 15px 0 16px;
    padding-left: 40px;
    font-family: "DejaVu Serif", serif;
    font-size: 16px;
    line-height: 20px;
    color: #000;
}
.code-list code {
    font-family: "DejaVu Sans Mono", monospace;
    font-size: 16.500px;
}
.worksheet {
    margin-top: 17px;
    border-collapse: collapse;
    background: #fff;
}
.worksheet td {
    padding: 0;
    border: 1px solid #333;
}
.worksheet-scrolled {
    margin-top: -63px;
}
td.answer {
    width: 248px;
}
.diagram {
    display: block;
}
.lbl {
    font: 12.500px "Liberation Sans", sans-serif;
    fill: #333;
    text-anchor: middle;
}
.val {
    font: bold 12.500px "Liberation Sans", sans-serif;
    fill: #000;
    text-anchor: middle;
}
.addr {
    font: bold 12.500px "Liberation Sans", sans-serif;
    fill: #111;
    text-anchor: end;
}
.ptr {
    fill: #0ff;
    stroke: #111;
}
.node {
    fill: #fff;
    stroke: #222;
}
.wire {
    fill: none;
    stroke: #111;
}
.wire-grey {
    stroke: #555;
    stroke-width: 1.500;
}
.tip {
    fill: #000;
}

/* scrollbars */
.vscroll {
    flex: none;
    position: relative;
    width: 13px;
    background: #c1c2c1;
}
.vscroll-thumb {
    position: absolute;
    left: 4px;
    top: 12px;
    width: 6px;
    height: 570px;
    border-radius: 3px;
    background: #7a7e7e;
}
.vscroll-remote {
    width: 9px;
    margin-right: 2px;
}
.vscroll-remote .vscroll-thumb {
    left: 2px;
    top: 331px;
    width: 5px;
    height: 458px;
}
.hscroll-row {
    display: flex;
    flex: none;
    height: 13px;
    background: #c1c2c1;
}
.hscroll {
    position: relative;
    flex: 1;
}
.hscroll-thumb {
    position: absolute;
    left: 3px;
    top: 4px;
    width: 1811px;
    height: 6px;
    border-radius: 3px;
    background: #7a7e7e;
}
.scroll-corner {
    width: 13px;
    background: #eeeeed;
}
.viewport-remote {
    border-bottom: 1px solid #b5b5b3;
}
.dash-line {
    position: absolute;
    left: 0;
    right: 0;
    bottom: 1px;
    border-bottom: 1px dashed #c8c8c8;
}
.pointer {
    position: absolute;
    left: 287px;
    top: 429px;
}
.rd-foot {
    flex: 1;
    background: #e8e8e7;
}

/* bottom window list */
.taskbar {
    display: flex;
    align-items: center;
    flex: none;
    box-sizing: border-box;
    height: 34px;
    padding-left: 2px;
    background: linear-gradient(#e4e4e4, #ededed);
    border-top: 1px solid #888;
}
.task {
    display: flex;
    align-items: center;
    box-sizing: border-box;
    width: 260px;
    height: 30px;
    margin-right: 6px;
    padding-left: 8px;
    background: #ececec;
    border: 1px solid #d0d0d0;
    border-bottom: 1px solid #9a9a9a;
    border-right: 1px solid #9a9a9a;
    font-size: 13.500px;
    white-space: nowrap;
    color: #3b3f40;
}
.task-active {
    background: #d9d9d9;
}
.task-icon {
    flex: none;
    width: 22px;
    height: 28px;
    margin-right: 5px;
}
.pager {
    box-sizing: border-box;
    width: 47px;
    height: 28px;
    margin-left: auto;
    margin-right: 3px;
    background: #e4e4e4;
    border: 1px solid #c8c8c8;
    line-height: 26px;
    text-align: center;
}

/* emacs window */
.emacs {
    position: absolute;
    left: 1048px;
    top: 145px;
    display: flex;
    flex-direction: column;
    width: 752px;
    height: 756px;
    background: #e8e8e7;
    border-radius: 7px 7px 0 0;
    box-shadow: 0 1px 8px rgba(0, 0, 0, 0.55);
    overflow: hidden;
}
.em-menu {
    display: flex;
    align-items: center;
    flex: none;
    height: 27px;
    padding-left: 8px;
    border-bottom: 1px solid #d0d0ce;
}
.em-menu span {
    margin-right: 17px;
}
.em-tools {
    display: flex;
    align-items: center;
    flex: none;
    height: 42px;
    padding-left: 2px;
}
.em-tool {
    flex: none;
    width: 24px;
    height: 30px;
    padding: 0 9.500px;
}
.em-save {
    margin: 0 0 0 -9px;
    color: #9b9d9d;
}
.em-sep {
    flex: none;
    width: 1px;
    height: 34px;
    margin: 0 17px;
    background: #d0d0ce;
}
.em-sep-undo {
    margin: 0 7px 0 16px;
}
.em-sep-tight {
    margin: 0 7px 0 6px;
}
.em-undo {
    flex: none;
    width: 22px;
    height: 26px;
}
.em-undo-text {
    margin-left: 1px;
}
.em-pane {
    display: flex;
    flex: none;
    background: #fff;
}
.em-pane-main {
    height: 540px;
}
.em-pane-splash {
    height: 54px;
}
.em-text, .mode-text, .echo-text {
    margin: 0;
    font-family: "DejaVu Sans Mono", monospace;
    font-size: 15px;
    line-height: 18px;
}
.em-text {
    flex: 1;
    color: #000;
}
.em-fringe {
    flex: none;
    width: 7px;
    background: #f2f2f2;
}
.em-pane > .em-text, .em-splash {
    border-left: 8px solid #f2f2f2;
}
.em-sb {
    position: relative;
    flex: none;
    width: 16px;
    background: #c1c2c1;
}
.em-thumb {
    position: absolute;
    left: 5px;
    width: 6px;
    border-radius: 3px;
    background: #7a7e7e;
}
.em-thumb-main {
    top: 3px;
    height: 516px;
}
.em-thumb-pip {
    top: 8px;
    height: 10px;
}
.em-thumb-splash {
    top: 4px;
    height: 40px;
}
.modeline {
    display: flex;
    flex: none;
    height: 18px;
    background: #bfbfbf;
    color: #222;
    padding-left: 8px;
}
.modeline .mode-text {
    flex: 1;
}
.modeline-off {
    height: 16px;
    background: #e3e3e3;
    border-top: 1px solid #bdbdbd;
    border-bottom: 1px solid #bdbdbd;
    color: #444;
}
.modeline-off .mode-text {
    line-height: 16px;
}
.em-splash {
    flex: 1;
    font-family: "DejaVu Sans", sans-serif;
    font-size: 15px;
    line-height: 18px;
    color: #000;
}
.splash-line {
    display: flex;
    height: 18px;
    white-space: pre;
}
.splash-red {
    color: #b22222;
}
.em-splash a {
    color: #3a5fcd;
    text-decoration: underline;
}
.tutorial {
    width: 219px;
}
.cursor {
    outline: 1px solid #000;
    outline-offset: -1px;
}
.echo {
    flex: none;
    height: 18px;
    background: #fff;
    padding-left: 8px;
}
.echo-text {
    color: #000;
}

/* remote desktop viewer */
.rd-menu {
    display: flex;
    align-items: center;
    flex: none;
    height: 27px;
    padding-left: 7px;
    background: #e8e8e7;
    border-bottom: 1px solid #c3c3c1;
}
.rd-menu span {
    margin-right: 17px;
}
.rd-tools {
    display: flex;
    align-items: center;
    flex: none;
    height: 42px;
    background: #e8e8e7;
    border-bottom: 1px solid #c3c3c1;
    color: #3b3f40;
}
.rd-connect {
    flex: none;
    width: 26px;
    height: 24px;
    margin-left: 12px;
}
.rd-label {
    flex: none;
    margin-left: 10px;
}
.rd-connect-text {
    width: 53px;
}
.rd-plug {
    flex: none;
    width: 26px;
    height: 24px;
    margin-left: 26px;
}
.rd-sep {
    flex: none;
    width: 1px;
    height: 34px;
    margin-left: 15px;
    background: #c9c9c7;
}
.rd-arrows {
    flex: none;
    width: 24px;
    height: 24px;
    margin-left: 17px;
}
.rd-shot {
    flex: none;
    width: 24px;
    height: 24px;
    margin-left: 19px;
}
.rd-sep-2 {
    margin-left: 16px;
}
.rd-full {
    flex: none;
    width: 20px;
    height: 20px;
    margin-left: 18px;
}
.rd-lock {
    flex: none;
    width: 20px;
    height: 20px;
    margin-left: 23px;
}
.rd-keys {
    flex: none;
    width: 22px;
    height: 24px;
    margin-left: 22px;
}
.rd-send {
    margin-left: 13px;
}
```
